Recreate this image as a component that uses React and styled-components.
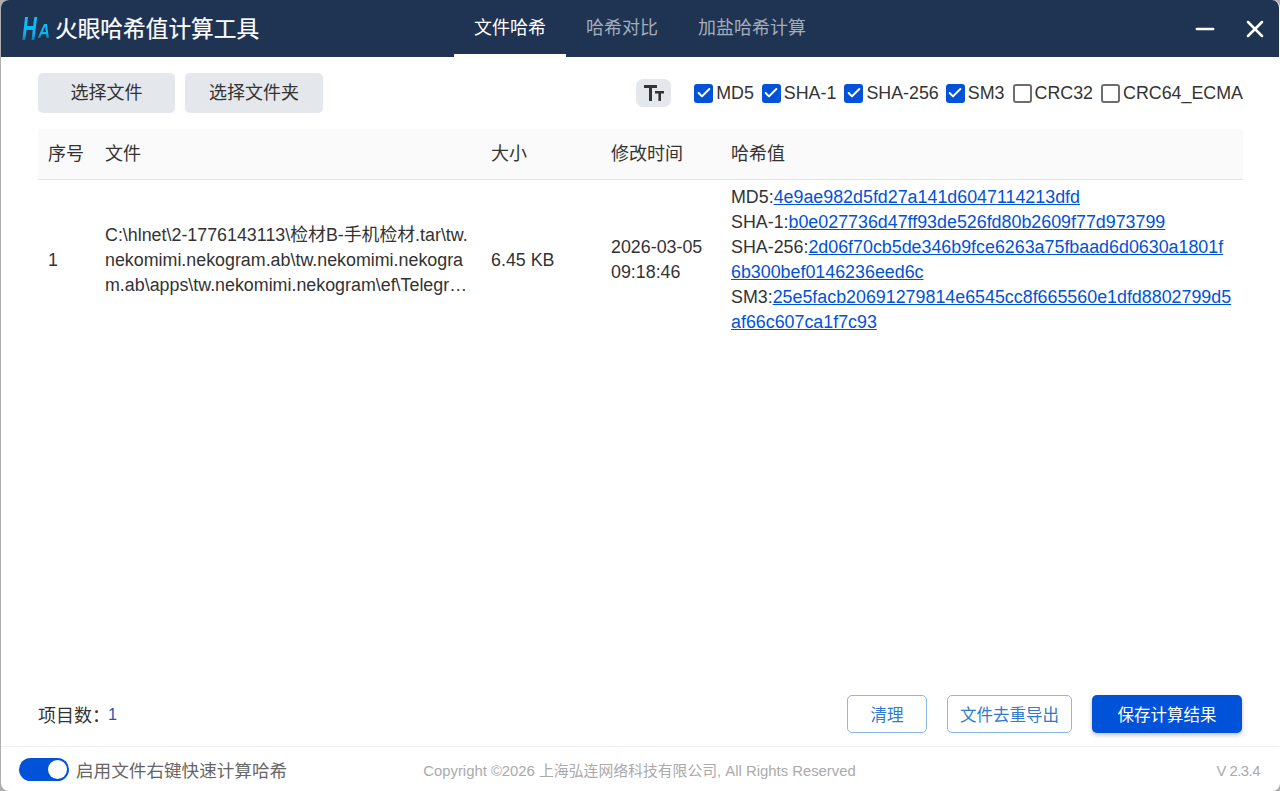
import React from 'react';
import styled, { createGlobalStyle } from 'styled-components';
import { Minus, X, Check } from 'lucide-react';

const Global = createGlobalStyle`
  html, body { margin: 0; padding: 0; width: 100%; height: 100%; background: #aeaeae; overflow: hidden; }
  #root { height: 100%; }
  * { box-sizing: border-box; }
`;
const FONT = `"Liberation Sans", "Noto Sans CJK SC", sans-serif`;

const Win = styled.div`
  width: 1279px; height: 791px; margin-left: 1px; display: flex; flex-direction: column;
  background: #fff; border-right: 1px solid #fff;
  border-radius: 8px; overflow: hidden; font-family: ${FONT}; font-size: 17.85px; color: #333;
`;
const TitleBar = styled.header`
  height: 57px; flex: none; background: #1f3353; display: grid;
  grid-template-columns: 453px 1fr auto; align-items: center; color: #fff;
`;
const Brand = styled.div`display: flex; align-items: center; padding-left: 21px; height: 100%;`;
const Logo = styled.span`
  width: 33px; height: 100%; display: flex; align-items: center; font-family: "Liberation Sans", sans-serif;
  font-weight: 700; font-style: italic; line-height: 1;
`;
const LogoPart = styled.span`
  display: block; flex: none; font-size: ${p => p.$size}px; padding-right: 5px;
  margin-top: ${p => p.$top}px; margin-right: ${p => p.$mr}px;
  transform: scaleX(${p => p.$sx}); transform-origin: left center;
  background: linear-gradient(180deg, #12c4fb 0%, #0db4f0 65%, #0a6f9e 90%);
  -webkit-background-clip: text; background-clip: text; color: transparent;
`;
const AppName = styled.h1`margin: 1px 0 0; font-size: 22.7px; font-weight: 400; line-height: 1; -webkit-text-stroke: 0.2px #fff;`;
const Tabs = styled.nav`display: flex; height: 100%;`;
const Tab = styled.div`
  height: 100%; padding: 0 20px 2px; display: flex; align-items: center; font-size: 18px;
  color: ${p => (p.$active ? '#fff' : '#a4adba')};
  border-bottom: 3px solid ${p => (p.$active ? '#fff' : 'transparent')};
`;
const WinCtl = styled.div`display: flex; align-items: center; gap: 22px; padding-right: 10px; height: 100%;`;
const CtlIcon = styled.span`display: inline-flex; color: #fff;`;

const Main = styled.main`flex: 1; display: flex; flex-direction: column; padding: 0 36px 0 37px; min-height: 0;`;
const Toolbar = styled.div`
  height: 72px; flex: none; display: flex; align-items: flex-start; justify-content: space-between; padding-top: 16px;
`;
const BtnGroup = styled.div`display: flex; gap: 10px;`;
const GreyBtn = styled.button`
  height: 40px; width: ${p => p.$w}px; border: 0; border-radius: 5px; background: #e4e7eb;
  font: inherit; font-size: 18px; color: #333; padding: 0 0 5px;
`;
const Options = styled.div`display: flex; align-items: center; height: 40px;`;
const FontBtn = styled.span`
  width: 35px; height: 28px; border-radius: 7px; background: #e4e7eb; display: flex; align-items: center;
  justify-content: center; margin-right: 23px;
`;
const CheckItem = styled.label`display: flex; align-items: center; gap: 3px; margin-left: ${p => p.$gap}px; white-space: nowrap; line-height: 19px;`;
const Box = styled.span`
  width: 19px; height: 19px; border-radius: 3px; display: flex; align-items: center; justify-content: center;
  background: ${p => (p.$on ? '#0052d9' : '#fff')};
  border: ${p => (p.$on ? '0' : '2px solid #6e6e6e')};
  color: #fff;
`;
const Row = styled.div`
  display: grid; grid-template-columns: 57px 386px 120px 120px 1fr; align-items: center;
`;
const Head = styled(Row)`height: 51px; background: #fafafa; border-bottom: 1px solid #e4e4e4; flex: none; font-size: 18px;`;
const Cell = styled.div`padding: 0 ${p => (p.$wrapEnd ? 11 : 10)}px 0 10px; line-height: 25px; min-width: 0;`;
const Clamp = styled.div`
  display: -webkit-box; -webkit-line-clamp: 3; -webkit-box-orient: vertical; overflow: hidden; word-break: break-all;
`;
const HashLink = styled.a`color: #0052d9; text-decoration: underline;`;
const HashLine = styled.div`word-break: break-all;`;
const BodyRow = styled(Row)`padding: 5px 0 6px;`;
const Spacer = styled.div`flex: 1;`;
const Actions = styled.div`
  flex: none; height: 51px; padding-bottom: 13px; display: flex; align-items: center; justify-content: space-between;
`;
const Count = styled.div`display: flex; align-items: center; font-size: 18px;`;
const CountNum = styled.span`color: #1f55b8; font-size: 16.25px; margin-left: 0;`;
const CountLabel = styled.span`width: 70px; white-space: nowrap;`;
const ActionGroup = styled.div`display: flex; gap: 20px; padding-right: 1px;`;
const ActionBtn = styled.button`
  height: 38px; width: ${p => p.$w}px; border-radius: 5px; font-family: inherit; font-size: 16.5px; padding: 0 0 1px;
  background: ${p => (p.$primary ? '#0052d9' : '#fff')};
  color: ${p => (p.$primary ? '#fff' : '#2f7ad0')};
  border: ${p => (p.$primary ? '0' : '1px solid #8ab8ea')};
  box-shadow: ${p => (p.$primary ? '0 2px 4px rgba(0,0,0,.25)' : 'none')};
`;
const Footer = styled.footer`
  flex: none; height: 45px; border-top: 1px solid #f0f0f0; display: grid; grid-template-columns: 1fr auto 1fr;
  align-items: center; padding: 0 19px 0 18px; color: #aaa; font-size: 14.85px;
`;
const SwitchWrap = styled.div`display: flex; align-items: center; gap: 7px; color: #666; font-size: 17.6px;`;
const Switch = styled.span`
  width: 50px; height: 23px; border-radius: 12px; background: #0052d9; position: relative; display: block;
  &::after { content: ''; position: absolute; right: 2px; top: 2px; width: 19px; height: 19px; border-radius: 50%; background: #fff; }
`;
const Copy = styled.div``;
const Version = styled.div`text-align: right; letter-spacing: -0.5px; padding-top: 3px;`;

const algos = [
  ['MD5', true, 0], ['SHA-1', true, 8], ['SHA-256', true, 8], ['SM3', true, 7], ['CRC32', false, 8], ['CRC64_ECMA', false, 8],
];

export default function App() {
  return (
    <>
      <Global />
      <Win>
        <TitleBar>
          <Brand>
            <Logo>
              <LogoPart $size={33} $top={-1} $mr={-13} $sx={0.62}>H</LogoPart>
              <LogoPart $size={21} $top={4} $mr={0} $sx={0.8}>A</LogoPart>
            </Logo>
            <AppName>火眼哈希值计算工具</AppName>
          </Brand>
          <Tabs>
            <Tab $active>文件哈希</Tab>
            <Tab>哈希对比</Tab>
            <Tab>加盐哈希计算</Tab>
          </Tabs>
          <WinCtl>
            <CtlIcon><Minus size={28} strokeWidth={2.2} /></CtlIcon>
            <CtlIcon><X size={28} strokeWidth={2.2} /></CtlIcon>
          </WinCtl>
        </TitleBar>
        <Main>
          <Toolbar>
            <BtnGroup>
              <GreyBtn $w={137}>选择文件</GreyBtn>
              <GreyBtn $w={138}>选择文件夹</GreyBtn>
            </BtnGroup>
            <Options>
              <FontBtn>
                <svg width="22" height="16" viewBox="0 0 22 16" fill="#333">
                  <path d="M1 0h13v3H9v13H6V3H1z" />
                  <path d="M12 6h9v2.400h-3V16h-2.600V8.400H12z" />
                </svg>
              </FontBtn>
              {algos.map(([name, on, gap]) => (
                <CheckItem key={name} $gap={gap}>
                  <Box $on={on}>{on && <Check size={16} strokeWidth={3} />}</Box>
                  {name}
                </CheckItem>
              ))}
            </Options>
          </Toolbar>
          <Head>
            <Cell>序号</Cell>
            <Cell>文件</Cell>
            <Cell>大小</Cell>
            <Cell>修改时间</Cell>
            <Cell>哈希值</Cell>
          </Head>
          <BodyRow>
            <Cell>1</Cell>
            <Cell>
              <Clamp>C:\hlnet\2-1776143113\检材B-手机检材.tar\tw.nekomimi.nekogram.ab\tw.nekomimi.nekogram.ab\apps\tw.nekomimi.nekogram\ef\Telegram-10.14.5-beta.apk.backup.files.tmp</Clamp>
            </Cell>
            <Cell>6.45 KB</Cell>
            <Cell>2026-03-05 09:18:46</Cell>
            <Cell $wrapEnd>
              <HashLine>MD5:<HashLink>4e9ae982d5fd27a141d6047114213dfd</HashLink></HashLine>
              <HashLine>SHA-1:<HashLink>b0e027736d47ff93de526fd80b2609f77d973799</HashLink></HashLine>
              <HashLine>SHA-256:<HashLink>2d06f70cb5de346b9fce6263a75fbaad6d0630a1801f6b300bef0146236eed6c</HashLink></HashLine>
              <HashLine>SM3:<HashLink>25e5facb20691279814e6545cc8f665560e1dfd8802799d5af66c607ca1f7c93</HashLink></HashLine>
            </Cell>
          </BodyRow>
          <Spacer />
          <Actions>
            <Count><CountLabel>项目数：</CountLabel><CountNum>1</CountNum></Count>
            <ActionGroup>
              <ActionBtn $w={80}>清理</ActionBtn>
              <ActionBtn $w={125}>文件去重导出</ActionBtn>
              <ActionBtn $w={150} $primary>保存计算结果</ActionBtn>
            </ActionGroup>
          </Actions>
        </Main>
        <Footer>
          <SwitchWrap><Switch />启用文件右键快速计算哈希</SwitchWrap>
          <Copy>Copyright ©2026 上海弘连网络科技有限公司, All Rights Reserved</Copy>
          <Version>V 2.3.4</Version>
        </Footer>
      </Win>
    </>
  );
}
